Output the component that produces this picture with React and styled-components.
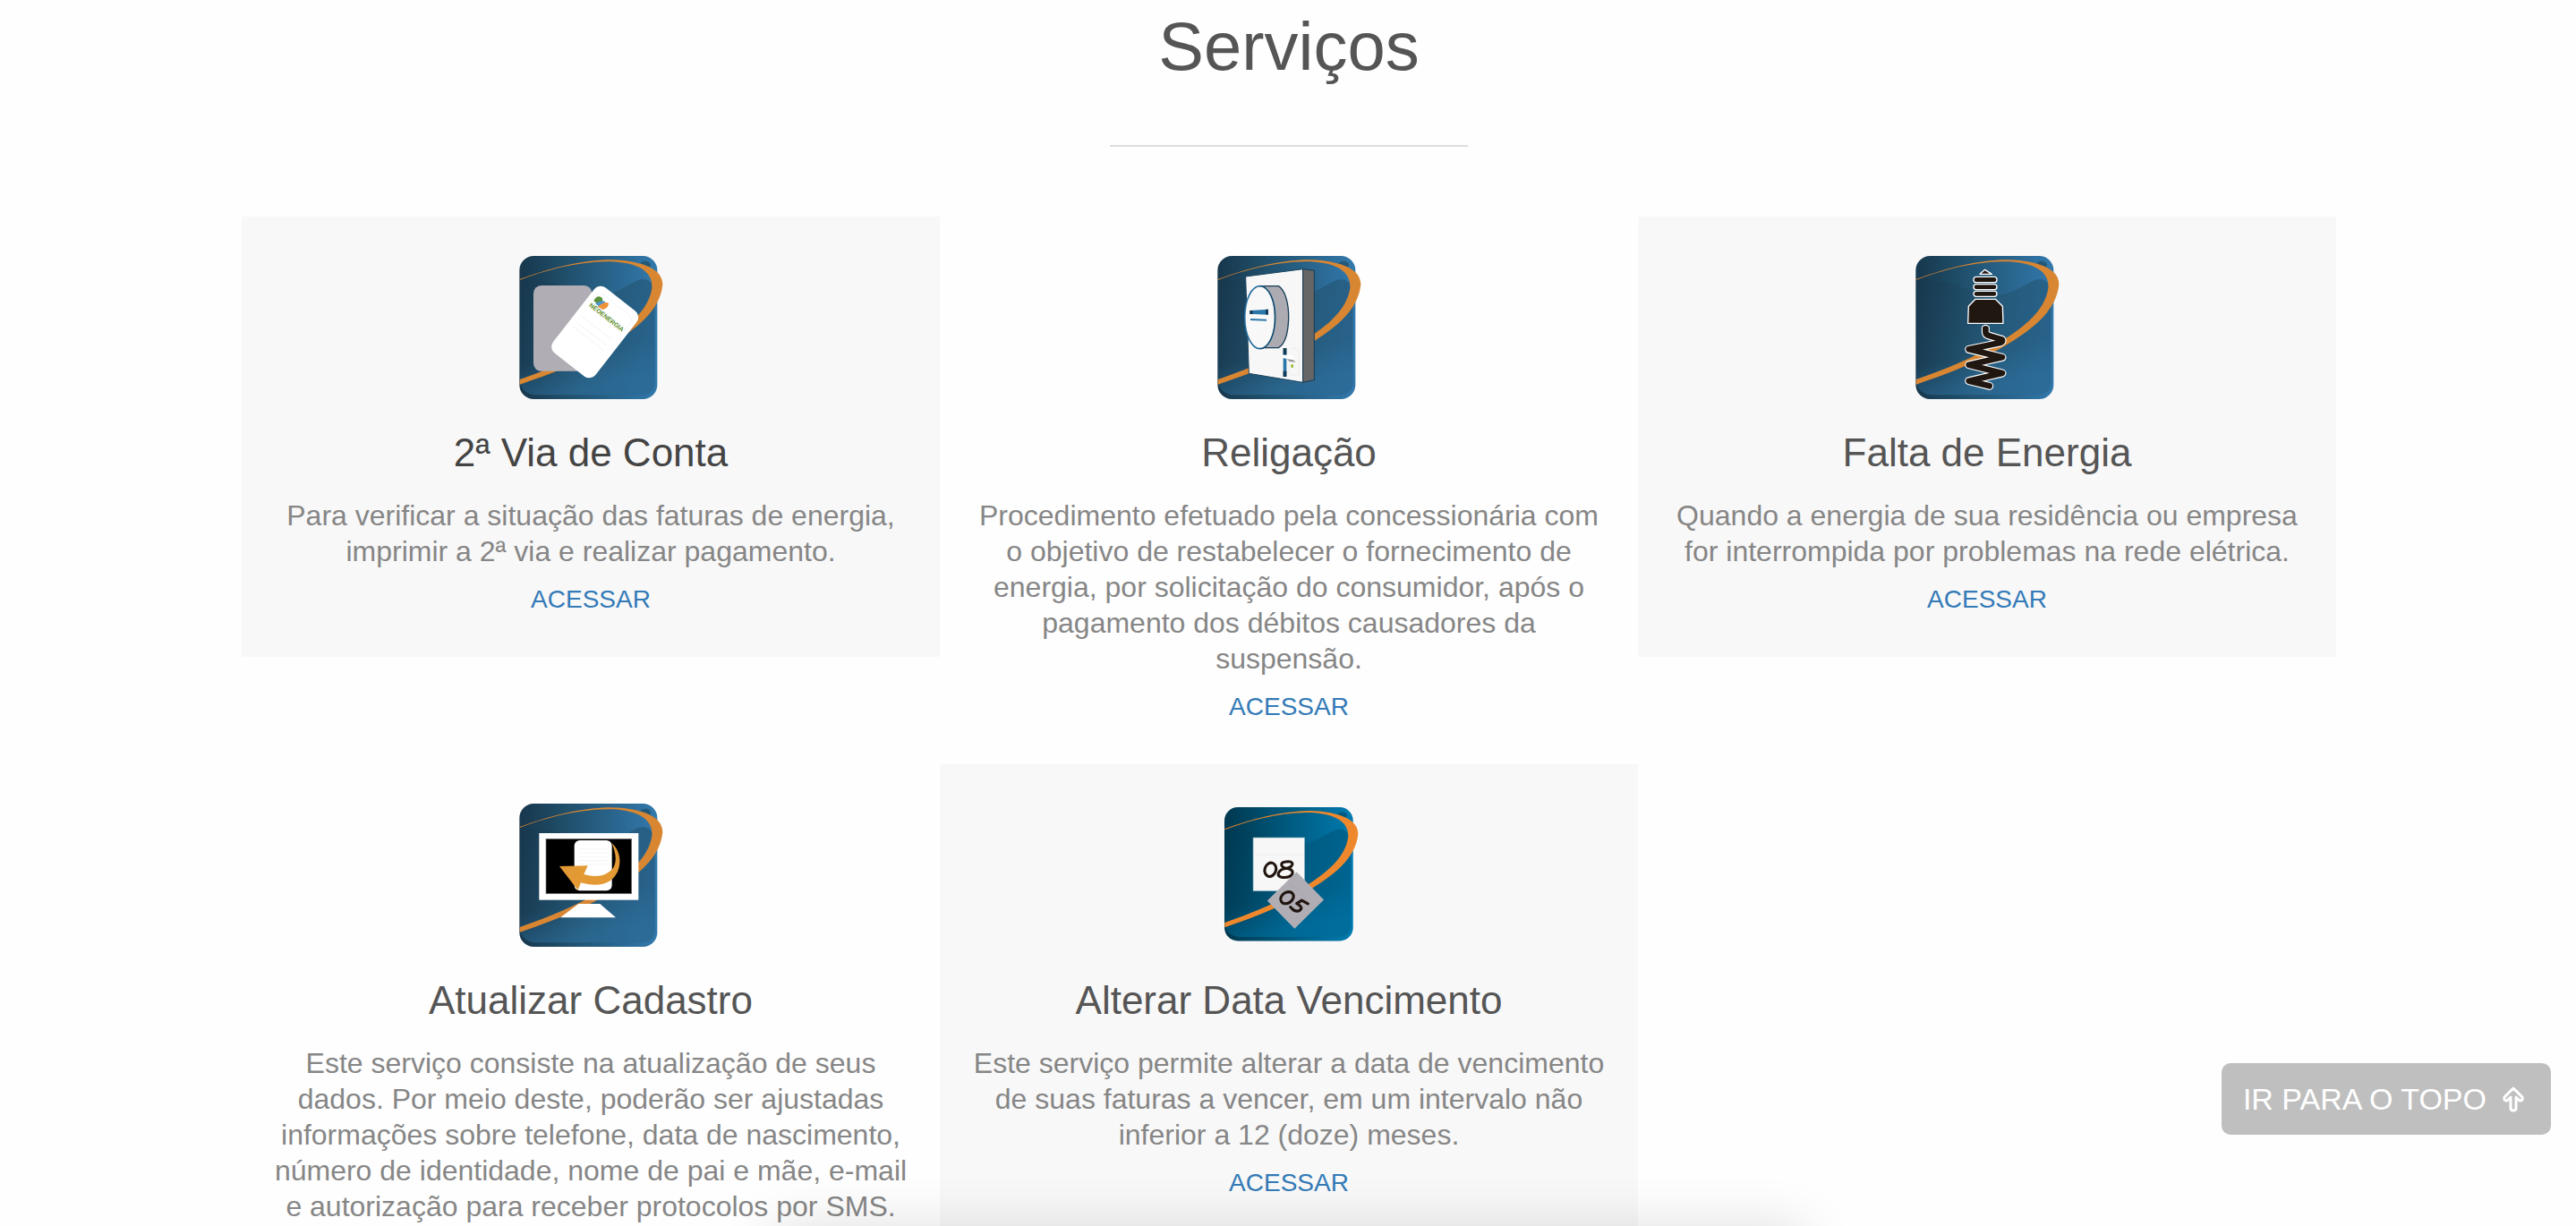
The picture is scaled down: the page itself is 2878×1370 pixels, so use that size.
import React from "react";
import styled, { createGlobalStyle } from "styled-components";

const GlobalStyle = createGlobalStyle`
  *, *::before, *::after { box-sizing: border-box; }
  html, body { height: 100%; }
  body {
    margin: 0;
    overflow: hidden;
    background: #fefefe;
    font-family: "Liberation Sans", Arial, sans-serif;
    color: #868686;
  }
`;

const Page = styled.main`
  position: relative;
  height: 100vh;
  padding-left: 2px;
  overflow: hidden;
`;

const Heading = styled.h1`
  margin: 0;
  padding-top: 8px;
  font-size: 76px;
  line-height: 88px;
  font-weight: 400;
  text-align: center;
  color: #555;
`;

const Rule = styled.hr`
  width: 400px;
  height: 2px;
  margin: 66px auto 78px;
  border: 0;
  background: #ddd;
`;

const Grid = styled.section`
  width: 100%;
  max-width: 2340px;
  margin: 0 auto;
  display: grid;
  grid-template-columns: repeat(3, minmax(0, 1fr));
  align-items: start;
`;

const Card = styled.article`
  display: flex;
  flex-direction: column;
  align-items: center;
  padding: 40px 34px 24px;
  text-align: center;
  background: ${(p) => (p.$shaded ? "#f8f8f8" : "transparent")};
`;

const Icon = styled.svg`
  display: block;
  width: 166px;
  height: 168px;
`;

const Title = styled.h2`
  margin: 30px 0 24px;
  font-size: 44px;
  line-height: 52px;
  font-weight: 400;
  color: ${(p) => (p.$dark ? "#444" : "#555")};
`;

const Text = styled.p`
  margin: 0;
  font-size: 32px;
  line-height: 40px;
`;

const Access = styled.a`
  margin: 14px 0 20px;
  font-size: 28px;
  line-height: 40px;
  color: #337ab7;
  text-decoration: none;
`;

const TopButton = styled.button`
  position: fixed;
  right: 28px;
  bottom: 102px;
  display: flex;
  align-items: center;
  gap: 18px;
  height: 80px;
  padding: 0 30px 0 24px;
  border: 0;
  border-radius: 10px;
  background: #bfbfbf;
  color: #fff;
  font-family: inherit;
  font-size: 34px;
  line-height: 40px;
  white-space: nowrap;
`;

const BottomShade = styled.div`
  position: absolute;
  left: 30%;
  right: 30%;
  top: 100%;
  height: 120px;
  pointer-events: none;
  box-shadow: 0 0 60px rgba(0, 0, 0, 0.12);
`;

function Tile({ id, bright }) {
  const dark = bright ? "#00384f" : "#17374c";
  const mid = bright ? "#005a80" : "#245877";
  const light = bright ? "#007bb0" : "#3279ad";
  return (
    <>
      <defs>
        <linearGradient id={`${id}-base`}>
          <stop offset="0" stopColor={dark} />
          <stop offset="0.35" stopColor={bright ? "#005071" : "#20506c"} />
          <stop offset="1" stopColor={light} />
        </linearGradient>
        <linearGradient id={`${id}-face`} x1="0" y1="0" x2="1" y2="0.15">
          <stop offset="0" stopColor={dark} />
          <stop offset="0.6" stopColor={mid} />
          <stop offset="1" stopColor={bright ? "#006490" : "#28628a"} />
        </linearGradient>
        <linearGradient id={`${id}-low`} x1="0" y1="0" x2="0.25" y2="1">
          <stop offset="0.7" stopColor={light} stopOpacity="0" />
          <stop offset="1" stopColor={light} stopOpacity="0.4" />
        </linearGradient>
      </defs>
      <rect x="60" y="48" width="462" height="480" rx="48" fill={`url(#${id}-base)`} />
      <path d="M62 135 C120 120 190 142 235 160 C285 184 335 186 382 169 L450 133 Q480 118 498 135 Q514 150 514 174 V468 Q514 514 468 514 H110 Q62 505 62 465Z" fill={`url(#${id}-face)`} />
      <path d="M62 135 H514 V468 Q514 514 468 514 H110 Q62 505 62 465Z" fill={`url(#${id}-low)`} />
      <ellipse cx="482" cy="78" rx="18" ry="13" fill={mid} />
      <path d="M61 126 C170 85 310 51 410 63 C488 73 541 97 540 145 C530 235 450 292 371 342 C275 402 160 446 61 479 V462 C155 430 260 387 348 333 C432 281 493 227 504 157 C510 92 440 67 355 67 C245 68 143 98 61 129Z" fill={bright ? "#ef882c" : "#d88632"} />
    </>
  );
}

function BillArt() {
  return (
    <>
      <rect x="107" y="147" width="196" height="287" rx="26" fill="#b0aeb4" />
      <g transform="translate(313 303) rotate(38)">
        <rect x="-90" y="-139" width="180" height="278" rx="27" fill="#fff" />
        <rect x="-76" y="-116" width="152" height="64" rx="24" fill="none" stroke="#eceef0" strokeWidth="2" />
        <path d="M-68 -80 Q-72 -106 -50 -105 L-40 -94 -42 -78Z" fill="#5d913c" />
        <path d="M-58 -76 Q-49 -100 -36 -101 L-28 -86 -38 -76Z" fill="#4d94d1" />
        <path d="M-45 -72 Q-40 -99 -24 -105 Q-13 -93 -25 -76Z" fill="#ef9237" />
        <text x="-70" y="-56" fill="#5a8b25" fontFamily="Liberation Sans, sans-serif" fontWeight="700" fontSize="21">NEOENERGIA</text>
        <path d="M-66 -14H58M-66 12H58M-66 30H58" stroke="#d6dce2" strokeWidth="2" strokeDasharray="3 3" />
      </g>
    </>
  );
}

function MeterArt() {
  return (
    <>
      <path d="M154 117 L346 92 V472 L165 442Z" fill="#f7f7f7" stroke="#1c4560" strokeWidth="3" />
      <path d="M346 92 L384 97 V464 L346 472Z" fill="#666" stroke="#153b54" strokeWidth="3" />
      <path d="M201 149 H264 C286 162 299 205 298 259 C296 313 286 344 264 356 H201Z" fill="#adabb2" stroke="#173e58" strokeWidth="4" />
      <ellipse cx="202" cy="254" rx="51" ry="105" fill="#f8f8f8" stroke="#246d9d" strokeWidth="5" />
      <path d="M202 149 C232 149 252 195 252 254 S232 359 202 359" fill="none" stroke="#163c54" strokeWidth="3" />
      <path d="M168 231 L230 227 V245 L168 242Z" fill="#2c77a9" />
      <path d="M168 231H178V243H168ZM221 227H230V245L221 244Z" fill="#163d58" />
      <path d="M170 258 L224 260 V266 L170 264Z" fill="#2c77a9" />
      <path d="M280 357H291V453H280Z" fill="#2a76aa" />
      <path d="M280 357H291V378H280ZM280 434H291V453H280Z" fill="#153c55" />
      <path d="M278 380 L310 381 L321 399 L278 390Z" fill="#fff" />
      <path d="M291 394L313 396L322 404L301 402Z" fill="#999" />
      <path d="M305 358 L332 359V448L300 446V405" fill="none" stroke="#e9e9e9" strokeWidth="2" />
      <ellipse cx="310" cy="417" rx="5" ry="6" fill="#9ebd3b" />
    </>
  );
}

function BulbArt() {
  const coil = "M294 292 V302 Q294 313 308 316 L349 328 Q354 336 340 340 L238 361 L350 388 L238 413 L350 441 L238 467 L307 484";
  return (
    <>
      <g fill="#211711" stroke="#fff" strokeWidth="4" strokeLinejoin="round">
        <path d="M292 94 L315 109 H275Z" />
        <rect x="254" y="118" width="78" height="19" rx="9" />
        <rect x="254" y="143" width="78" height="18" rx="9" />
        <rect x="254" y="166" width="78" height="18" rx="9" />
        <path d="M260 193H327L351 217L353 274H235L237 217Z" />
      </g>
      <g fill="none" strokeLinejoin="round" strokeLinecap="round">
        <path d={coil} stroke="#fff" strokeWidth="27" />
        <path d="M294 294V283" stroke="#fff" strokeWidth="25" strokeLinecap="butt" />
        <path d={coil} stroke="#211711" strokeWidth="20" />
        <path d="M294 300V285" stroke="#211711" strokeWidth="18" strokeLinecap="butt" />
      </g>
    </>
  );
}

function MonitorArt() {
  return (
    <>
      <rect x="126" y="147" width="333" height="224" fill="#fff" />
      <rect x="149" y="166" width="287" height="184" fill="#000" stroke="#777" strokeWidth="2" />
      <rect x="244" y="171" width="126" height="169" rx="18" fill="#fff" />
      <path d="M260 200H355M260 213H355M260 226H355M260 239H355M260 251H355" stroke="#eee" strokeWidth="2" />
      <path d="M370 181 C407 213 405 279 364 307 C337 325 298 323 266 313 L256 338 L194 258 L289 256 L276 285 C318 298 355 289 374 264 C390 239 380 208 370 181Z" fill="#e39a35" />
      <path d="M258 384H330L383 430H197Z" fill="#fff" />
    </>
  );
}

function CalendarArt() {
  return (
    <>
      <rect x="163" y="157" width="185" height="192" fill="#f7f7f7" stroke="#78a7b9" strokeWidth="2" />
      <path d="M164 218H347" stroke="#e8e8e8" strokeWidth="2" />
      <g fill="none" stroke="#20150f" strokeWidth="10" strokeLinecap="round">
        <ellipse cx="225" cy="272" rx="20" ry="25" transform="rotate(18 225 272)" />
        <path d="M284 267 C262 265 257 245 280 244 C313 237 310 263 284 267 C252 270 242 298 269 300 C311 302 316 271 284 267Z" />
      </g>
      <path d="M319 280L417 380L312 484L214 384Z" fill="#b0aeb4" />
      <path d="M287 313L386 412" stroke="#a4a2a8" strokeWidth="2" />
      <g transform="translate(313 386) rotate(38)" fill="none" stroke="#20150f" strokeWidth="10" strokeLinecap="round" strokeLinejoin="round">
        <ellipse cx="-30" cy="7" rx="19" ry="25" transform="rotate(18 -30 7)" />
        <path d="M42 -22L17 -18L10 2Q37 -3 34 13Q29 32 0 26" />
      </g>
    </>
  );
}

const SERVICES = [
  { id: "bill", title: "2ª Via de Conta", art: BillArt, shaded: true, dark: true,
    text: "Para verificar a situação das faturas de energia, imprimir a 2ª via e realizar pagamento." },
  { id: "meter", title: "Religação", art: MeterArt,
    text: "Procedimento efetuado pela concessionária com o objetivo de restabelecer o fornecimento de energia, por solicitação do consumidor, após o pagamento dos débitos causadores da suspensão." },
  { id: "bulb", title: "Falta de Energia", art: BulbArt, shaded: true,
    text: "Quando a energia de sua residência ou empresa for interrompida por problemas na rede elétrica." },
  { id: "monitor", title: "Atualizar Cadastro", art: MonitorArt,
    text: "Este serviço consiste na atualização de seus dados. Por meio deste, poderão ser ajustadas informações sobre telefone, data de nascimento, número de identidade, nome de pai e mãe, e-mail e autorização para receber protocolos por SMS." },
  { id: "calendar", title: "Alterar Data Vencimento", art: CalendarArt, shaded: true, bright: true,
    text: "Este serviço permite alterar a data de vencimento de suas faturas a vencer, em um intervalo não inferior a 12 (doze) meses." },
];

export default function App() {
  return (
    <Page>
      <GlobalStyle />
      <Heading>Serviços</Heading>
      <Rule />
      <Grid>
        {SERVICES.map(({ id, title, art: Art, shaded, dark, bright, text }) => (
          <Card key={id} $shaded={shaded}>
            <Icon viewBox={bright ? "25 22 533 540" : "50 36 498 504"} aria-hidden="true">
              <Tile id={id} bright={bright} />
              <Art />
            </Icon>
            <Title $dark={dark}>{title}</Title>
            <Text>{text}</Text>
            <Access href={`#${id}`}>ACESSAR</Access>
          </Card>
        ))}
      </Grid>
      <BottomShade />
      <TopButton type="button">
        IR PARA O TOPO
        <svg width="24" height="30" viewBox="0 0 24 30" fill="none" stroke="#fff" strokeWidth="3" strokeLinejoin="round" aria-hidden="true">
          <path d="M12 3L2 13Q1 17 5 17L9 13V25Q9 28 12 28Q15 28 15 25V13L19 17Q23 17 22 13Z" />
        </svg>
      </TopButton>
    </Page>
  );
}
